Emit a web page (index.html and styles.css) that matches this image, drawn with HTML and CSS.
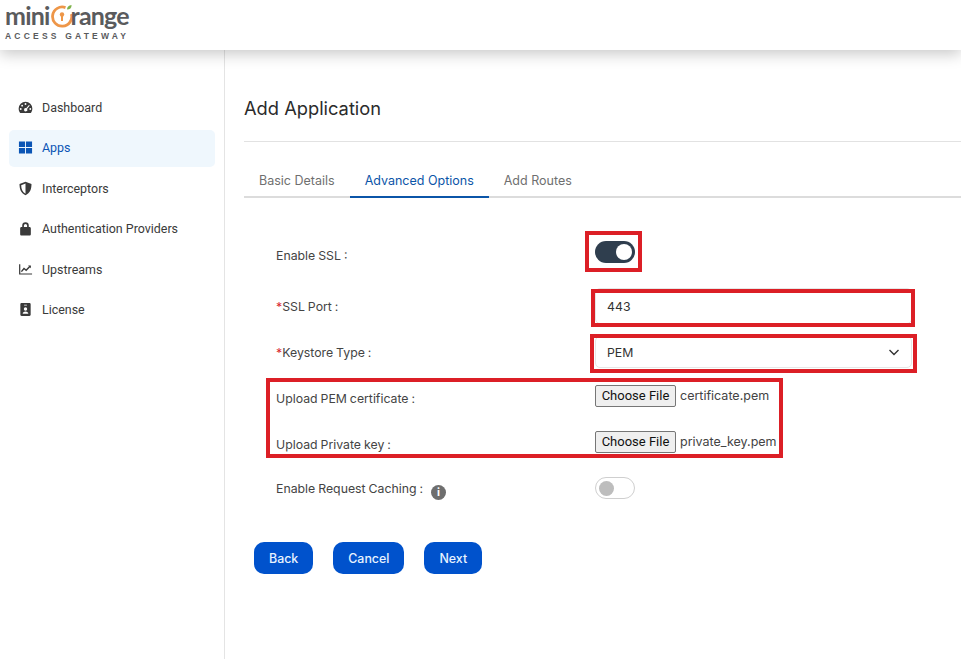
FILE: index.html
```html
<!DOCTYPE html>
<html lang="en">
<head>
    <meta charset="UTF-8">
    <meta name="viewport" content="width=device-width, initial-scale=1.0">
    <title>Add Application</title>
    <link rel="stylesheet" href="styles.css">
</head>
<body>

<header class="topbar">
    <div class="logo">
        <div class="logo-name">
            <span>mini</span>
            <svg class="logo-mark" viewBox="0 0 24 24" width="24" height="24">
                <path d="M15.5 3.6A9.6 9.6 0 1 0 21.4 10" fill="none" stroke="#ee9648" stroke-width="2.8"/>
                <path d="M17 5.5c0-2.6 1.6-4.2 4.6-4.5 0 3-1.600 4.500-4.600 4.500z" fill="#7db24a"/>
                <circle cx="12" cy="10.500" r="2.200" fill="#ee9648"/>
                <rect x="11" y="11" width="2" height="6" fill="#ee9648"/>
            </svg>
            <span>range</span>
        </div>
        <div class="logo-sub">ACCESS GATEWAY</div>
    </div>
</header>

<div class="layout">
    <nav class="sidebar">
        <a class="nav-item">
            <svg viewBox="0 0 16 16"><path fill-rule="evenodd" d="M8 1.800A7.300 7.300 0 0 0 .7 9.100c0 1.700.5 3.200 1.400 4.400.2.300.5.400.8.400h10.200c.3 0 .6-.1.800-.4.900-1.200 1.400-2.700 1.400-4.400A7.300 7.300 0 0 0 8 1.800zM8 3.300a1 1 0 1 1 0 2 1 1 0 0 1 0-2zM4.400 5a1 1 0 1 1 0 2 1 1 0 0 1 0-2zM2.900 8.600a1 1 0 1 1 0 2 1 1 0 0 1 0-2zm10.200 0a1 1 0 1 1 0 2 1 1 0 0 1 0-2zM11.700 5.200l.9.700-3 3.600a1.700 1.700 0 1 1-.9-.7l3-3.600z"/></svg>
            <span>Dashboard</span>
        </a>
        <a class="nav-item active">
            <svg viewBox="0 0 16 16"><path d="M1 1.500h6.500V7.500H1zM8.500 1.500H15V7.500H8.500zM1 8.500h6.500v6H1zM8.500 8.500H15v6H8.500z"/></svg>
            <span>Apps</span>
        </a>
        <a class="nav-item">
            <svg viewBox="0 0 16 16"><path fill-rule="evenodd" d="M8 .8 1.600 3.200c0 5.200 1.400 9.700 6.400 12 5-2.300 6.400-6.800 6.400-12L8 .8zm0 1.900v10.800c-3.300-1.800-4.500-5-4.600-9L8 2.700z"/></svg>
            <span>Interceptors</span>
        </a>
        <a class="nav-item">
            <svg viewBox="0 0 16 16"><path d="M4.500 6.500V4.800a3.500 3.500 0 0 1 7 0v1.700h.8c.8 0 1.400.6 1.400 1.400v6.200c0 .8-.6 1.400-1.400 1.400H3.700c-.8 0-1.400-.6-1.400-1.400V7.900c0-.8.6-1.400 1.400-1.400h.8zm1.800 0h3.400V4.800a1.700 1.700 0 0 0-3.400 0v1.700z"/></svg>
            <span>Authentication Providers</span>
        </a>
        <a class="nav-item">
            <svg viewBox="0 0 16 16"><path d="M1.800 2.500v10.300h13.200" fill="none" stroke="currentColor" stroke-width="1.300"/><path d="M3.600 10.300 6.400 7l2.300 1.900 4.100-4.400" fill="none" stroke="currentColor" stroke-width="1.500"/><path d="M10.700 3.600h3v3z"/></svg>
            <span>Upstreams</span>
        </a>
        <a class="nav-item">
            <svg viewBox="0 0 16 16"><path fill-rule="evenodd" d="M3.800 1h8.400c.7 0 1.300.6 1.300 1.300v11.400c0 .7-.6 1.300-1.300 1.300H3.800c-.7 0-1.300-.6-1.300-1.300V2.300C2.500 1.600 3.100 1 3.800 1zm2.700 1.800v1h3v-1h-3zM8 5.600a1.800 1.800 0 1 0 0 3.600 1.800 1.800 0 0 0 0-3.600zM5 12.400h6c0-1.400-1.200-2.400-3-2.400s-3 1-3 2.400z"/></svg>
            <span>License</span>
        </a>
    </nav>

    <main class="content">
        <h1 class="page-title">Add Application</h1>

        <div class="tabs">
            <a class="tab">Basic Details</a>
            <a class="tab current">Advanced Options</a>
            <a class="tab">Add Routes</a>
        </div>

        <form class="app-form">
            <div class="form-row row-ssl">
                <label>Enable SSL :</label>
                <span class="switch on"><i></i></span>
            </div>
            <div class="form-row">
                <label><b>*</b>SSL Port :</label>
                <input class="field" type="text" value="443">
            </div>
            <div class="form-row">
                <label><b>*</b>Keystore Type :</label>
                <div class="field select-field">
                    <span>PEM</span>
                    <svg viewBox="0 0 12 12" width="12" height="12"><path d="M1.500 4 6 8.500 10.500 4" fill="none" stroke="#333" stroke-width="1.400"/></svg>
                </div>
            </div>
            <div class="form-row">
                <label>Upload PEM certificate :</label>
                <div class="file-pick"><button type="button">Choose File</button><span>certificate.pem</span></div>
            </div>
            <div class="form-row">
                <label>Upload Private key :</label>
                <div class="file-pick"><button type="button">Choose File</button><span>private_key.pem</span></div>
            </div>
            <div class="form-row">
                <label>Enable Request Caching : <span class="info">i</span></label>
                <span class="switch"><i></i></span>
            </div>

            <!-- red annotation boxes drawn over the form -->
            <div class="mark mark-switch"></div>
            <div class="mark mark-port"></div>
            <div class="mark mark-type"></div>
            <div class="mark mark-upload"></div>
        </form>

        <div class="actions">
            <button type="button" class="btn">Back</button>
            <button type="button" class="btn">Cancel</button>
            <button type="button" class="btn">Next</button>
        </div>
    </main>
</div>

</body>
</html>
```

FILE: styles.css
```css
* {
    box-sizing: border-box;
}

html, body {
    height: 100%;
}

body {
    margin: 0;
    background: #fff;
    color: #333;
    font-family: Inter, "Noto Sans", sans-serif;
    overflow: hidden;
}

.topbar {
    position: relative;
    z-index: 2;
    height: 50px;
    padding: 3px 0 0 5px;
    background: #fff;
    box-shadow: 0 4px 14px rgba(0, 0, 0, 0.22);
}

.logo-name {
    display: flex;
    align-items: flex-start;
    height: 24px;
    color: #5a5b5d;
    font-family: Lato, sans-serif;
    font-size: 25px;
    font-weight: 700;
    letter-spacing: -0.8px;
    line-height: 24px;
}

.logo-mark {
    flex: none;
    margin: 1px -3px 0 0;
}

.logo-sub {
    margin-top: 4px;
    color: #5a5b5d;
    font-family: "Liberation Sans", sans-serif;
    font-size: 8.500px;
    font-weight: 700;
    letter-spacing: 3.200px;
    line-height: 10px;
}

.layout {
    display: flex;
    height: 609px;
}

.sidebar {
    display: flex;
    flex-direction: column;
    gap: 3.500px;
    width: 225px;
    padding: 39.500px 9px 0;
    border-right: 1px solid #e4e4e4;
}

.nav-item {
    display: flex;
    align-items: center;
    gap: 9px;
    height: 37px;
    padding: 0 0 2px 9px;
    border-radius: 5px;
    color: #3a3a3a;
    font-family: Roboto, sans-serif;
    font-size: 12.450px;
}

.nav-item svg {
    width: 15px;
    height: 15px;
    fill: currentColor;
}

.nav-item.active {
    background: #eff7fd;
    color: #0b55b5;
}

.content {
    flex: 1;
    padding-left: 19px;
}

.page-title {
    margin: 0;
    padding: 44.500px 0 20.500px;
    border-bottom: 1px solid #e2e2e2;
    color: #2b2b2b;
    font-size: 18.300px;
    font-weight: 400;
    line-height: 26px;
}

.tabs {
    display: flex;
    margin-top: 28px;
    border-bottom: 2px solid #dcdcdc;
}

.tab {
    margin-bottom: -2px;
    padding: 0 15px 4px 15px;
    border-bottom: 2px solid transparent;
    color: #6f6f6f;
    font-size: 12.500px;
    line-height: 22px;
}

.tab.current {
    border-bottom-color: #0b55a8;
    color: #0b55a8;
}

.app-form {
    position: relative;
    display: flex;
    flex-direction: column;
    margin-top: 29px;
}

.form-row {
    display: grid;
    grid-template-columns: 319px 317px;
    align-items: center;
    height: 46px;
    padding-left: 32px;
    color: #444;
    font-size: 12.300px;
    word-spacing: -0.5px;
}

.form-row b {
    color: #d9282f;
    font-weight: 400;
}

.row-ssl {
    height: 56px;
}

.field {
    width: 317px;
    height: 32px;
    padding: 0 11px;
    border: 1px solid #e6e6e6;
    border-radius: 5px;
    background: #fff;
    color: #333;
    font: inherit;
}

input.field {
    height: 36px;
}

.select-field {
    display: flex;
    align-items: center;
    justify-content: space-between;
}

.file-pick {
    display: flex;
    align-items: center;
    gap: 4px;
    margin-top: -5px;
    color: #444;
    font-size: 12.500px;
    word-spacing: 0;
}

.file-pick button {
    width: 81px;
    height: 22px;
    padding: 0;
    border: 1px solid #767676;
    border-radius: 2px;
    background: #efefef;
    color: #111;
    font-family: Roboto, sans-serif;
    font-size: 13px;
}

.switch {
    display: block;
    position: relative;
    width: 40px;
    height: 22px;
    margin-top: -4px;
    border: 1px solid #cfcfcf;
    border-radius: 11px;
    background: #fff;
}

.switch i {
    position: absolute;
    top: 3px;
    left: 3px;
    width: 15px;
    height: 15px;
    border-radius: 50%;
    background: #bdbdbd;
}

.switch.on {
    margin-top: -6px;
    border: none;
    background: #2f3e4e;
}

.switch.on i {
    top: 3px;
    left: 21px;
    width: 16px;
    height: 16px;
    background: #fff;
}

.info {
    display: inline-block;
    width: 15px;
    height: 15px;
    margin-left: 5px;
    border-radius: 50%;
    background: #6e6e6e;
    color: #fff;
    font-size: 11px;
    font-weight: 700;
    line-height: 15px;
    text-align: center;
    vertical-align: -3px;
}

.mark {
    position: absolute;
    border: 4px solid #dc1f26;
}

.mark-switch {
    top: 4px;
    left: 341px;
    width: 57px;
    height: 41px;
}

.mark-port {
    top: 62px;
    left: 347px;
    width: 324px;
    height: 38px;
}

.mark-type {
    top: 107px;
    left: 346px;
    width: 327px;
    height: 39px;
}

.mark-upload {
    top: 151px;
    left: 22px;
    width: 517px;
    height: 80px;
}

.actions {
    display: flex;
    gap: 20px;
    margin-top: 29px;
    padding-left: 10px;
}

.btn {
    height: 32px;
    padding: 0 15px;
    border: none;
    border-radius: 10px;
    background: #0052cc;
    color: #e8f2ff;
    font-family: Inter, sans-serif;
    font-size: 12.400px;
    font-weight: 500;
}
```
